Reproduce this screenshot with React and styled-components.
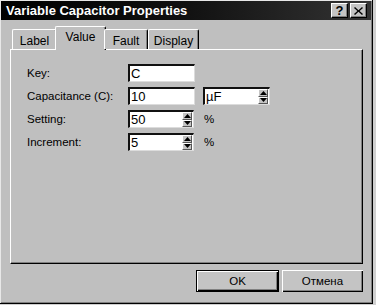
import styled, { createGlobalStyle } from 'styled-components';

const GlobalStyle = createGlobalStyle`
  html, body {
    margin: 0;
    padding: 0;
    background: #d0d0d0;
  }
  body {
    font-family: "Liberation Sans", Arial, sans-serif;
    font-size: 11.5px;
    color: #000;
  }
`;

const tabs = [
  { name: 'Label', width: 45 },
  { name: 'Value', width: 51, active: true },
  { name: 'Fault', width: 44 },
  { name: 'Display', width: 51 },
];

const fields = [
  { label: 'Key:', value: 'C' },
  { label: 'Capacitance (C):', value: '10', unit: 'µF' },
  { label: 'Setting:', value: '50', spin: true, suffix: '%' },
  { label: 'Increment:', value: '5', spin: true, suffix: '%' },
];

const SpinArrows = () => (
  <SpinBox>
    <SpinHalf>
      <svg width="7" height="4" viewBox="0 0 7 4"><path d="M3.5 0 L7 4 L0 4 Z" fill="#000" /></svg>
    </SpinHalf>
    <SpinHalf>
      <svg width="7" height="4" viewBox="0 0 7 4"><path d="M0 0 L7 0 L3.5 4 Z" fill="#000" /></svg>
    </SpinHalf>
  </SpinBox>
);

const App = () => {
  return (
    <>
      <GlobalStyle />
      <Window>
        <TitleBar>
          <TitleText>Variable Capacitor Properties</TitleText>
          <TitleButtons>
            <CaptionButton>?</CaptionButton>
            <CaptionButton>
              <svg width="9" height="8" viewBox="0 0 9 8">
                <path d="M1 0 L4.5 3.2 L8 0 L9 1 L5.6 4 L9 7 L8 8 L4.5 4.8 L1 8 L0 7 L3.4 4 L0 1 Z" fill="#000" />
              </svg>
            </CaptionButton>
          </TitleButtons>
        </TitleBar>

        <Content>
          <TabStrip>
            {tabs.map((t) => (
              <Tab key={t.name} $active={t.active} $width={t.width}>{t.name}</Tab>
            ))}
          </TabStrip>
          <Panel>
            <Form>
              {fields.map((f) => (
                <Row key={f.label}>
                  <FieldLabel>{f.label}</FieldLabel>
                  <Field $width={f.spin ? 66 : 67}>
                    <FieldText>{f.value}</FieldText>
                    {f.spin && <SpinArrows />}
                  </Field>
                  {f.unit && (
                    <Field $width={67} $gap={8}>
                      <FieldText>{f.unit}</FieldText>
                      <SpinArrows />
                    </Field>
                  )}
                  {f.suffix && <Suffix>{f.suffix}</Suffix>}
                </Row>
              ))}
            </Form>
          </Panel>
          <ButtonRow>
            <DialogButton $width={83} $default>OK</DialogButton>
            <DialogButton $width={81}>Отмена</DialogButton>
          </ButtonRow>
        </Content>
      </Window>
    </>
  );
};

const Window = styled.div`
  box-sizing: border-box;
  width: 373px;
  height: 304px;
  background: #bfbfbf;
  border-right: 1px solid #000;
  border-bottom: 1px solid #000;
  box-shadow: inset 1px 1px 0 #e8e8e8, inset -1px -1px 0 #808080;
  padding: 1px 1px 0 1px;
  display: flex;
  flex-direction: column;
`;

const TitleBar = styled.div`
  height: 19px;
  display: flex;
  align-items: center;
  justify-content: space-between;
  padding: 0 4px 0 5px;
  background: linear-gradient(to right, #000, #111 50%, #333);
`;

const TitleText = styled.span`
  color: #fff;
  font-weight: bold;
  font-size: 13px;
`;

const TitleButtons = styled.div`
  display: flex;
  gap: 2px;
`;

const CaptionButton = styled.div`
  box-sizing: border-box;
  width: 17px;
  height: 15px;
  background: #c4c4c4;
  border-top: 1px solid #fff;
  border-left: 1px solid #fff;
  border-right: 1px solid #000;
  border-bottom: 1px solid #000;
  box-shadow: inset -1px -1px 0 #808080;
  display: flex;
  align-items: center;
  justify-content: center;
  font-weight: bold;
  font-size: 13px;
  line-height: 1;
`;

const Content = styled.div`
  display: flex;
  flex-direction: column;
  padding: 6px 8px 0 9px;
`;

const TabStrip = styled.div`
  display: flex;
  align-items: flex-end;
  height: 23px;
  padding-left: 2px;
  position: relative;
  z-index: 1;
`;

const Tab = styled.div`
  box-sizing: border-box;
  width: ${(p) => p.$width}px;
  height: ${(p) => (p.$active ? 24 : 20)}px;
  margin: ${(p) => (p.$active ? '0 -2px -1px -2px' : '0')};
  padding-top: ${(p) => (p.$active ? 2 : 3)}px;
  text-align: center;
  background: #bfbfbf;
  border-top: 1px solid #fff;
  border-left: 1px solid #fff;
  border-right: 1px solid #000;
  border-radius: 2px 2px 0 0;
  box-shadow: inset -1px 0 0 #808080;
  font-size: 12px;
  line-height: 16px;
`;

const Panel = styled.div`
  box-sizing: border-box;
  height: 215px;
  border-top: 1px solid #fff;
  border-left: 1px solid #fff;
  border-right: 1px solid #000;
  border-bottom: 1px solid #000;
  box-shadow: inset -1px -1px 0 #808080;
`;

const Form = styled.div`
  display: flex;
  flex-direction: column;
  gap: 5px;
  padding: 14px 0 0 16px;
`;

const Row = styled.div`
  display: flex;
  align-items: center;
  height: 18px;
`;

const FieldLabel = styled.span`
  width: 101px;
`;

const Field = styled.div`
  box-sizing: border-box;
  width: ${(p) => p.$width}px;
  height: 18px;
  margin-left: ${(p) => p.$gap || 0}px;
  background: #fff;
  border-top: 2px solid #111;
  border-left: 2px solid #111;
  border-right: 1px solid #dcdcdc;
  border-bottom: 1px solid #dcdcdc;
  display: flex;
  align-items: stretch;
`;

const FieldText = styled.span`
  flex: 1;
  padding-left: 1px;
  font-size: 13px;
  line-height: 15px;
`;

const SpinBox = styled.div`
  width: 10px;
  display: flex;
  flex-direction: column;
  margin-right: 1px;
`;

const SpinHalf = styled.div`
  flex: 1;
  box-sizing: border-box;
  background: #c4c4c4;
  border-top: 1px solid #fff;
  border-left: 1px solid #fff;
  border-right: 1px solid #555;
  border-bottom: 1px solid #555;
  display: flex;
  align-items: center;
  justify-content: center;
`;

const Suffix = styled.span`
  margin-left: 10px;
`;

const ButtonRow = styled.div`
  display: flex;
  justify-content: flex-end;
  gap: 3px;
  padding-top: 6px;
`;

const DialogButton = styled.div`
  box-sizing: border-box;
  width: ${(p) => p.$width}px;
  height: 22px;
  background: #c4c4c4;
  border: ${(p) => (p.$default ? '1px solid #000' : 'none')};
  box-shadow: inset 1px 1px 0 #fff, inset -1px -1px 0 #000, inset -2px -2px 0 #808080;
  display: flex;
  align-items: center;
  justify-content: center;
  font-size: 11.5px;
`;

export default App;
